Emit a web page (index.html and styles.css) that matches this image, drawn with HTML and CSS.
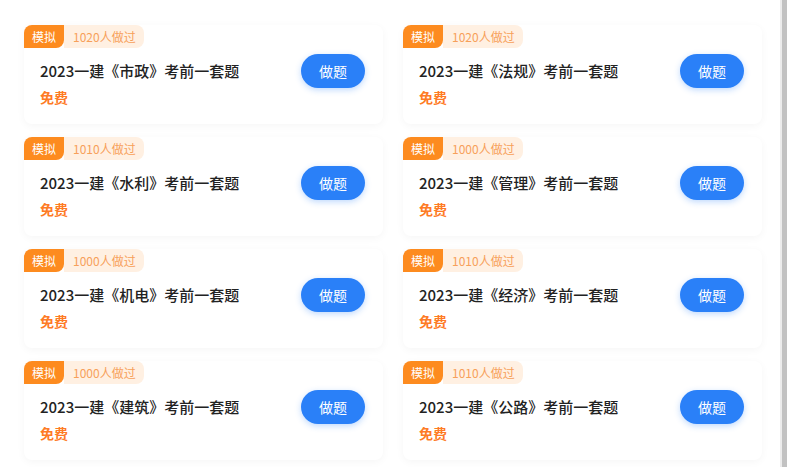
FILE: index.html
```html
<!DOCTYPE html>
<html>
  <head>
    <meta charset="UTF-8" />
    <title>考前一套题</title>
    <link rel="stylesheet" href="styles.css">
  </head>
  <body>
    <div class="page">
      <!-- 试卷列表 -->
      <div class="paper-list">
        <div class="paper-card">
          <div class="paper-tag"><span class="tag-type">模拟</span><span class="tag-count">1020人做过</span></div>
          <div class="paper-row">
            <div class="paper-title">2023一建《市政》考前一套题</div>
            <button class="paper-btn">做题</button>
          </div>
          <div class="paper-price">免费</div>
        </div>
        <div class="paper-card">
          <div class="paper-tag"><span class="tag-type">模拟</span><span class="tag-count">1020人做过</span></div>
          <div class="paper-row">
            <div class="paper-title">2023一建《法规》考前一套题</div>
            <button class="paper-btn">做题</button>
          </div>
          <div class="paper-price">免费</div>
        </div>
        <div class="paper-card">
          <div class="paper-tag"><span class="tag-type">模拟</span><span class="tag-count">1010人做过</span></div>
          <div class="paper-row">
            <div class="paper-title">2023一建《水利》考前一套题</div>
            <button class="paper-btn">做题</button>
          </div>
          <div class="paper-price">免费</div>
        </div>
        <div class="paper-card">
          <div class="paper-tag"><span class="tag-type">模拟</span><span class="tag-count">1000人做过</span></div>
          <div class="paper-row">
            <div class="paper-title">2023一建《管理》考前一套题</div>
            <button class="paper-btn">做题</button>
          </div>
          <div class="paper-price">免费</div>
        </div>
        <div class="paper-card">
          <div class="paper-tag"><span class="tag-type">模拟</span><span class="tag-count">1000人做过</span></div>
          <div class="paper-row">
            <div class="paper-title">2023一建《机电》考前一套题</div>
            <button class="paper-btn">做题</button>
          </div>
          <div class="paper-price">免费</div>
        </div>
        <div class="paper-card">
          <div class="paper-tag"><span class="tag-type">模拟</span><span class="tag-count">1010人做过</span></div>
          <div class="paper-row">
            <div class="paper-title">2023一建《经济》考前一套题</div>
            <button class="paper-btn">做题</button>
          </div>
          <div class="paper-price">免费</div>
        </div>
        <div class="paper-card">
          <div class="paper-tag"><span class="tag-type">模拟</span><span class="tag-count">1000人做过</span></div>
          <div class="paper-row">
            <div class="paper-title">2023一建《建筑》考前一套题</div>
            <button class="paper-btn">做题</button>
          </div>
          <div class="paper-price">免费</div>
        </div>
        <div class="paper-card">
          <div class="paper-tag"><span class="tag-type">模拟</span><span class="tag-count">1010人做过</span></div>
          <div class="paper-row">
            <div class="paper-title">2023一建《公路》考前一套题</div>
            <button class="paper-btn">做题</button>
          </div>
          <div class="paper-price">免费</div>
        </div>
      </div>
      <!-- 滚动条 -->
      <div class="scrollbar"></div>
    </div>
  </body>
</html>
```

FILE: styles.css
```css
html,
body {
  margin: 0;
  height: 100%;
  background-color: #fff;
  font-family: "Noto Sans CJK SC", "Noto Sans", sans-serif;
}

.page {
  display: flex;
  height: 100%;
  overflow: hidden;
}

/* 两列卡片 */
.paper-list {
  flex: 1;
  display: grid;
  grid-template-columns: 359px 359px;
  column-gap: 20px;
  row-gap: 13px;
  align-content: start;
  padding: 25px 0 0 24px;
}

.paper-card {
  background-color: #fff;
  border-radius: 8px;
  box-shadow: 0 2px 8px rgba(0, 0, 0, 0.04);
  padding: 0 18px 18px 16px;
}

/* 左上角标签 */
.paper-tag {
  display: flex;
  height: 23px;
  margin-left: -16px;
  font-size: 12px;
  line-height: 23px;
}

.tag-type {
  background-color: #fd8b1f;
  color: #fff;
  padding: 0 8px;
  border-radius: 8px 0 8px 0;
}

.tag-count {
  background-color: #fff0e2;
  color: #f7a05a;
  padding: 0 8px 0 9px;
  border-radius: 0 8px 8px 0;
}

.paper-row {
  display: flex;
  align-items: center;
  justify-content: space-between;
  margin-top: 6px;
}

.paper-title {
  font-size: 15px;
  font-weight: 500;
  color: #222;
  line-height: 20px;
  margin-top: -1px;
}

.paper-btn {
  width: 64px;
  height: 34px;
  border: none;
  border-radius: 17px;
  background-color: #2a80f8;
  color: #fff;
  font-family: inherit;
  font-size: 14px;
  box-shadow: 0 2px 6px rgba(42, 128, 248, 0.3);
  cursor: pointer;
}

.paper-price {
  font-size: 14px;
  font-weight: 700;
  color: #fe7b25;
  line-height: 18px;
}

.scrollbar {
  width: 5px;
  border-left: 2px solid #ececec;
  background-color: #c2c2c2;
}
```
